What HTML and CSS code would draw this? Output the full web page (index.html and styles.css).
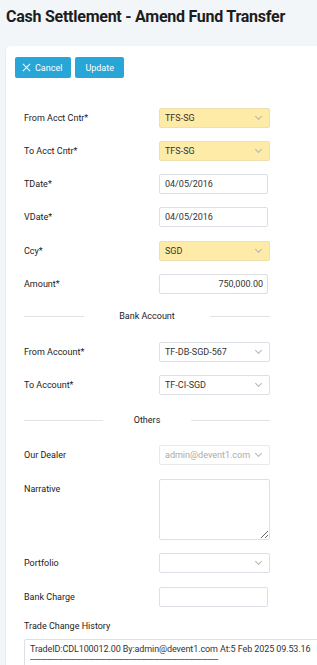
FILE: index.html
```html
<!DOCTYPE html>
<html lang="en">

<head>
  <meta charset="utf-8">
  <title>Cash Settlement - Amend Fund Transfer</title>
  <meta name="viewport" content="width=device-width,initial-scale=1">
  <link rel="stylesheet" href="styles.css">
</head>

<body>
  <h1 class="page-title">Cash Settlement - Amend Fund Transfer</h1>
  <div class="card">
    <div class="toolbar">
      <button class="btn">
        <svg class="btn-icon" viewBox="0 0 10 10" width="9" height="9">
          <path d="M1 1L9 9M9 1L1 9" stroke="#fff" stroke-width="1.2" fill="none" />
        </svg>
        Cancel
      </button>
      <button class="btn">Update</button>
    </div>

    <div class="form">
      <div class="row">
        <label class="label">From Acct Cntr*</label>
        <div class="select required"><span>TFS-SG</span><i class="chevron"></i></div>
      </div>
      <div class="row">
        <label class="label">To Acct Cntr*</label>
        <div class="select required"><span>TFS-SG</span><i class="chevron"></i></div>
      </div>
      <div class="row">
        <label class="label">TDate*</label>
        <input class="input" type="text" value="04/05/2016">
      </div>
      <div class="row">
        <label class="label">VDate*</label>
        <input class="input" type="text" value="04/05/2016">
      </div>
      <div class="row row-ccy">
        <label class="label">Ccy*</label>
        <div class="select required"><span>SGD</span><i class="chevron"></i></div>
      </div>
      <div class="row">
        <label class="label">Amount*</label>
        <input class="input num" type="text" value="750,000.00">
      </div>

      <div class="divider divider-bank"><span>Bank Account</span></div>

      <div class="row">
        <label class="label">From Account*</label>
        <div class="select"><span>TF-DB-SGD-567</span><i class="chevron"></i></div>
      </div>
      <div class="row">
        <label class="label">To Account*</label>
        <div class="select"><span>TF-CI-SGD</span><i class="chevron"></i></div>
      </div>

      <div class="divider divider-others"><span>Others</span></div>

      <div class="row">
        <label class="label">Our Dealer</label>
        <div class="select disabled"><span>admin@devent1.com</span><i class="chevron"></i></div>
      </div>
      <div class="row row-top">
        <label class="label">Narrative</label>
        <textarea class="textarea"></textarea>
      </div>
      <div class="row">
        <label class="label">Portfolio</label>
        <div class="select"><span></span><i class="chevron"></i></div>
      </div>
      <div class="row row-charge">
        <label class="label">Bank Charge</label>
        <input class="input" type="text" value="">
      </div>

      <div class="history-label">Trade Change History</div>
      <div class="history">
        <div>TradeID:CDL100012.00 By:admin@devent1.com At:5 Feb 2025 09.53.16</div>
        <div class="dashes">------------------------------------------------------------------------------------------</div>
      </div>
    </div>
  </div>
</body>

</html>
```

FILE: styles.css
```css
html,
body {
  margin: 0;
  padding: 0;
  background-color: #f3f6f9;
  font-family: Roboto, "Liberation Sans", Arial, sans-serif;
  color: #222;
  overflow: hidden;
}

.page-title {
  margin: 0;
  padding: 7px 6px 0;
  height: 46px;
  box-sizing: border-box;
  font-size: 16px;
  font-weight: 700;
  color: #1d1d1d;
  letter-spacing: -0.25px;
}

.card {
  margin-left: 6px;
  width: 340px;
  min-height: 640px;
  background-color: #fff;
  border-top-left-radius: 4px;
  box-shadow: -1px 0 1px rgba(0, 0, 0, 0.04);
  padding: 11px 0 0 9px;
  box-sizing: border-box;
}

.toolbar {
  display: flex;
  gap: 4px;
}

.btn {
  display: flex;
  align-items: center;
  gap: 4px;
  height: 21px;
  padding: 0 9px 0 7px;
  border: none;
  border-radius: 2px;
  background-color: #27a6d7;
  color: #fff;
  font-family: Roboto, "Liberation Sans", Arial, sans-serif;
  font-size: 9px;
  cursor: pointer;
}

.btn:last-child {
  padding: 0 10px;
}

.form {
  display: flex;
  flex-direction: column;
  padding: 30px 0 0 9px;
  width: 246px;
}

.row {
  display: flex;
  align-items: center;
  margin-bottom: 13px;
}

.row-ccy {
  margin-top: 1px;
}

.row-top {
  align-items: flex-start;
  margin-top: 1px;
}

.row-top .label {
  padding-top: 5px;
}

.row-charge {
  margin-top: 1px;
}

.label {
  width: 135px;
  flex: none;
  font-size: 9px;
  color: #222;
}

.select,
.input {
  height: 20px;
  box-sizing: border-box;
  border: 1px solid #dcdfe6;
  border-radius: 2px;
  font-family: Roboto, "Liberation Sans", Arial, sans-serif;
  font-size: 9px;
  color: #333;
  background-color: #fff;
}

.select {
  width: 111px;
  flex: none;
  display: flex;
  align-items: center;
  justify-content: space-between;
  padding: 0 8px 0 5px;
}

.select.required {
  background-color: #feeba8;
  border-color: #ece0b0;
}

.select.disabled {
  color: #aaa;
  border-color: #e8eaee;
}

.chevron {
  width: 4px;
  height: 4px;
  border-right: 1px solid #b5b5b5;
  border-bottom: 1px solid #b5b5b5;
  transform: rotate(45deg);
  margin-top: -3px;
}

.input {
  width: 109px;
  flex: none;
  padding: 0 5px;
  outline: none;
}

.input.num {
  text-align: right;
  padding-right: 4px;
}

.textarea {
  width: 111px;
  height: 61px;
  flex: none;
  box-sizing: border-box;
  border: 1px solid #dcdfe6;
  border-radius: 2px;
  margin: 0;
  resize: both;
}

.divider {
  display: flex;
  align-items: center;
  height: 14px;
  font-size: 9px;
  color: #222;
}

.divider::before,
.divider::after {
  content: "";
  flex: 1;
  height: 1px;
  background-color: #e3e3e3;
}

.divider span {
  padding: 0 35px;
}

.divider-bank {
  margin: 2px 0 19px;
}

.divider-others {
  margin: 5px 0 18px;
}

.divider-others span {
  padding: 0 31px;
}

.history-label {
  font-size: 9px;
  color: #222;
  line-height: 12px;
}

.history {
  margin-top: 7px;
  width: 320px;
  height: 40px;
  border: 1px solid #dcdfe6;
  border-radius: 2px;
  padding: 4px 5px;
  box-sizing: border-box;
  font-size: 9px;
  letter-spacing: -0.1px;
  line-height: 10px;
  color: #333;
  white-space: nowrap;
  overflow: hidden;
}

.dashes {
  letter-spacing: -0.4px;
  width: 198px;
  overflow: hidden;
}
```
